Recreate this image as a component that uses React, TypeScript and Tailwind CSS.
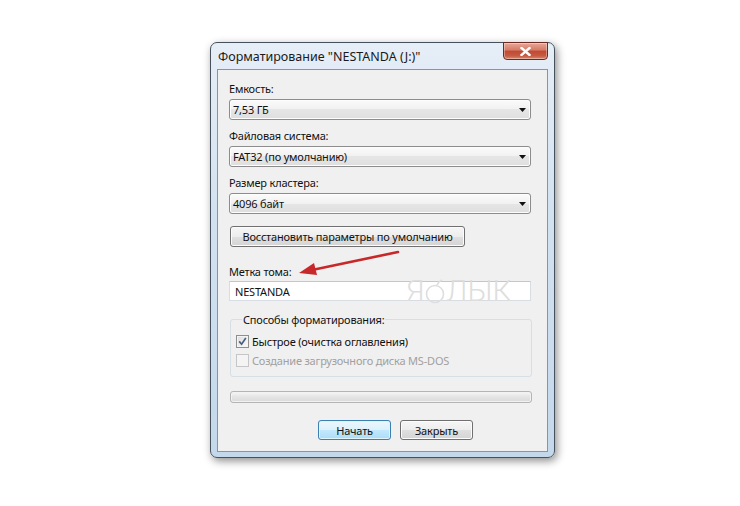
import React from "react";

const font = { fontFamily: '"Noto Sans", "Liberation Sans", sans-serif' };

function Combo({ text }: { text: string }) {
  return (
    <div className="mt-[3px] flex h-[21px] w-[302px] items-center justify-between rounded-[3px] border border-[#8c8c8c] bg-[linear-gradient(#fbfbfb,#f1f1f1_50%,#e6e6e6_50%,#dedede)] pl-[3px] pr-[4px] shadow-[inset_0_0_0_1px_#fdfdfd]">
      <span className="leading-[15px]">{text}</span>
      <svg width="7" height="4" viewBox="0 0 7 4">
        <path d="M0 0H7L3.5 4Z" fill="#111" />
      </svg>
    </div>
  );
}

function Label({ text, className = "" }: { text: string; className?: string }) {
  return <div className={"h-[15px] leading-[15px] " + className}>{text}</div>;
}

export default function App() {
  return (
    <div
      className="relative h-[506px] w-[740px] overflow-hidden bg-white pl-[210px] pt-[42px] text-[11px] tracking-[-0.2px] text-[#111]"
      style={font}
    >
      {/* window */}
      <div className="flex h-[416px] w-[345px] flex-col rounded-[7px] border border-[#47515c] bg-[linear-gradient(#e6eef7,#d3e2f1_40%,#c4d8ec)] shadow-[2px_3px_9px_rgba(0,0,0,0.45)]">
        {/* title bar */}
        <div className="flex h-[26px] items-start justify-between pl-[7px] pr-[6px]">
          <span className="pt-[6px] text-[12.5px] leading-[15px] tracking-normal text-[#1a1a1a]">
            Форматирование "NESTANDA (J:)"
          </span>
          <div className="-mt-px flex h-[18px] w-[45px] items-center justify-center rounded-b-[4px] border border-[#6b2a20] bg-[linear-gradient(#e8a796,#d57a66_45%,#c24830_50%,#c65a42_80%,#d98a6e)] shadow-[inset_0_0_0_1px_rgba(255,255,255,0.35)]">
            <svg width="11" height="9" viewBox="0 0 11 9">
              <path
                d="M1.5 1 L9.5 8 M9.5 1 L1.5 8"
                stroke="#ffffff"
                strokeWidth="2.4"
                strokeLinecap="square"
              />
            </svg>
          </div>
        </div>

        {/* client area */}
        <div className="relative mx-[6px] h-[383px] border border-[#8296ab] bg-[#f0f0f0] pl-[11px]">
          <Label text="Емкость:" className="mt-[11px]" />
          <Combo text="7,53 ГБ" />
          <Label text="Файловая система:" className="mt-[8px]" />
          <Combo text="FAT32 (по умолчанию)" />
          <Label text="Размер кластера:" className="mt-[8px]" />
          <Combo text="4096 байт" />

          <button className="ml-px mt-[12px] flex h-[21px] w-[235px] items-center justify-center whitespace-nowrap rounded-[3px] border border-[#707070] bg-[linear-gradient(#f6f6f6,#ededed_50%,#e0e0e0_50%,#d4d4d4)] leading-[15px] tracking-[-0.2px] shadow-[inset_0_0_0_1px_#fcfcfc]">
            Восстановить параметры по умолчанию
          </button>

          <Label text="Метка тома:" className="mt-[17px]" />
          <div className="mt-[2px] flex h-[20px] w-[302px] items-center border border-[#d8dde3] border-t-[#c3c7cc] bg-white pl-[5px] leading-[15px]">
            NESTANDA
          </div>

          <fieldset className="ml-px mt-[11px] w-[302px] rounded-[3px] border border-[#d5dfe5] pb-[6px] pl-[5px]">
            <legend className="ml-[6px] px-px leading-[15px]">Способы форматирования:</legend>
            <div className="mt-[5px] flex h-[19px] items-center">
              <div className="flex h-[13px] w-[13px] items-center justify-center border border-[#8e8f8f] bg-[linear-gradient(135deg,#dcdcdc,#fbfbfb)] shadow-[inset_0_0_0_1px_#f4f4f4]">
                <svg width="9" height="9" viewBox="0 0 9 9">
                  <path d="M1.2 4.4 L3.6 7.2 L7.8 1" stroke="#4a5f80" strokeWidth="1.7" fill="none" />
                </svg>
              </div>
              <span className="ml-[3px] leading-[15px]">Быстрое (очистка оглавления)</span>
            </div>
            <div className="flex h-[19px] items-center">
              <div className="h-[13px] w-[13px] border border-[#c6c6c6] bg-[#f4f4f4]" />
              <span className="ml-[3px] leading-[15px] text-[#a0a0a0]">
                Создание загрузочного диска MS-DOS
              </span>
            </div>
          </fieldset>

          <div className="ml-px mt-[14px] h-[12px] w-[302px] rounded-[3px] border border-[#b4b4b4] bg-[linear-gradient(#f6f6f6,#e4e4e4_50%,#dadada)] shadow-[inset_0_0_0_1px_#f2f2f2]" />

          <div className="ml-[89px] mt-[17px] flex gap-[9px]">
            <button className="flex h-[20px] w-[73px] items-center justify-center rounded-[3px] border border-[#3c7fb1] bg-[linear-gradient(#ecf7fd,#dcf1fc_50%,#c3e8fd_50%,#acdcf6)] leading-[15px] shadow-[inset_0_0_0_1px_#dff3fd]">
              Начать
            </button>
            <button className="flex h-[20px] w-[73px] items-center justify-center rounded-[3px] border border-[#707070] bg-[linear-gradient(#f6f6f6,#ededed_50%,#e0e0e0_50%,#d4d4d4)] leading-[15px] shadow-[inset_0_0_0_1px_#fcfcfc]">
              Закрыть
            </button>
          </div>
        </div>
      </div>

      {/* watermark */}
      <div
        className="pointer-events-none absolute left-[406px] top-[273px] flex items-center text-[30px] leading-[36px] tracking-normal text-[#dedede]"
        style={{ fontFamily: 'Roboto, "Noto Sans", sans-serif', fontWeight: 300 }}
      >
        <span>Я</span>
        <svg width="20" height="28" viewBox="0 0 20 28" className="mx-px mt-[2px]">
          <circle cx="10" cy="16" r="8.5" stroke="#dedede" strokeWidth="1.6" fill="none" />
          <path d="M12 7 Q14 3 17 2" stroke="#dedede" strokeWidth="1.6" fill="none" />
        </svg>
        <span>ЛЫК</span>
      </div>

      {/* red arrow */}
      <svg
        className="pointer-events-none absolute left-0 top-0"
        width="740"
        height="506"
        viewBox="0 0 740 506"
      >
        <path d="M398 252 L312 270" stroke="#c8282a" strokeWidth="2.6" strokeLinecap="round" />
        <path d="M299 273 L314 263 L317 275 Z" fill="#c8282a" />
      </svg>
    </div>
  );
}
